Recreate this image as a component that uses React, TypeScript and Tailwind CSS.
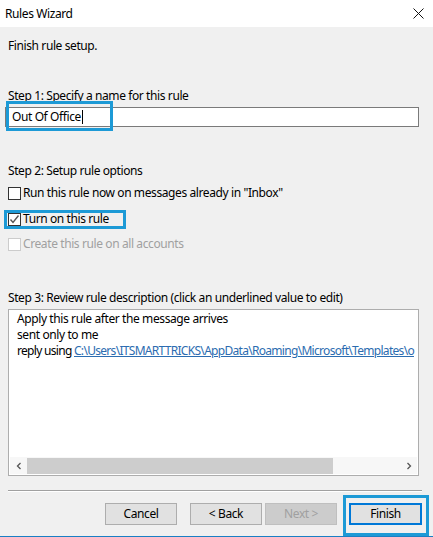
import React from "react";

const font = { fontFamily: '"Noto Sans", "Segoe UI", sans-serif' };

function Box({ checked, disabled }: { checked?: boolean; disabled?: boolean }) {
  return (
    <div
      className={
        "w-[13px] h-[13px] border bg-white flex items-center justify-center shrink-0 " +
        (disabled ? "border-[#cccccc]" : "border-[#333333]")
      }
    >
      {checked && (
        <svg width="11" height="11" viewBox="0 0 11 11">
          <path d="M1.5 5.5 L4 8.5 L9.5 1.5" fill="none" stroke="#555" strokeWidth="1.4" />
        </svg>
      )}
    </div>
  );
}

export default function App() {
  return (
    <div className="w-[433px] h-[537px] bg-[#f0f0f0] text-[12px] text-black relative overflow-hidden leading-[16px] tracking-[-0.4px]" style={font}>
      {/* title bar */}
      <div className="h-[27px] bg-white flex items-center justify-between pl-[5px] pr-[9px]">
        <span className="text-[12px]">Rules Wizard</span>
        <svg width="11" height="11" viewBox="0 0 11 11">
          <path d="M0.5 0.5 L10.5 10.5 M10.5 0.5 L0.5 10.5" stroke="#111" strokeWidth="1" />
        </svg>
      </div>

      <div className="pl-[8px] pt-[11px]">Finish rule setup.</div>

      <div className="pl-[8px] mt-[34px]">Step 1: Specify a name for this rule</div>
      <div className="relative ml-[5px] mt-[3px] w-[414px] h-[20px] border border-[#7a7a7a] bg-white flex items-center pl-[6px]">
        <span>Out Of Office</span>
        <span className="w-[1px] h-[14px] bg-black ml-[1px]" />
        <div className="absolute left-[0px] top-[-7px] w-[107px] h-[30px] border-[3px] border-[#1d9ad6]" />
      </div>

      <div className="pl-[8px] mt-[36px]">Step 2: Setup rule options</div>
      <div className="pl-[8px] mt-[6px] flex items-center gap-[2px] h-[16px] relative">
        <Box />
        <span>Run this rule now on messages already in "Inbox"</span>
      </div>
      <div className="pl-[8px] mt-[10px] flex items-center gap-[2px] h-[16px] relative">
        <Box checked />
        <span>Turn on this rule</span>
        <div className="absolute left-[4px] top-[-1px] w-[122px] h-[19px] border-[3px] border-[#1d9ad6]" />
      </div>
      <div className="pl-[8px] mt-[9px] flex items-center gap-[2px] h-[16px] text-[#a0a0a0]">
        <Box disabled />
        <span>Create this rule on all accounts</span>
      </div>

      <div className="pl-[8px] mt-[38px]">Step 3: Review rule description (click an underlined value to edit)</div>
      <div className="ml-[8px] mt-[3px] w-[411px] h-[167px] border border-[#adadad] bg-white flex flex-col">
        <div className="flex-1 pl-[8px] pt-[1px] overflow-hidden whitespace-nowrap">
          <div>Apply this rule after the message arrives</div>
          <div>sent only to me</div>
          <div className="tracking-[-0.7px]">
            reply using{" "}
            <span className="text-[#2b6cb0] underline">C:\Users\ITSMARTTRICKS\AppData\Roaming\Microsoft\Templates\o</span>
          </div>
        </div>
        <div className="h-[17px] mb-[1px] mx-[1px] flex items-center bg-[#f7f7f7]">
          <div className="w-[17px] h-[17px] flex items-center justify-center">
            <svg width="8" height="8" viewBox="0 0 8 8">
              <path d="M5.5 1 L2.5 4 L5.5 7" fill="none" stroke="#555" strokeWidth="1.3" />
            </svg>
          </div>
          <div className="w-[306px] h-[16px] bg-[#cdcdcd]" />
          <div className="flex-1" />
          <div className="w-[17px] h-[17px] flex items-center justify-center">
            <svg width="8" height="8" viewBox="0 0 8 8">
              <path d="M2.5 1 L5.5 4 L2.5 7" fill="none" stroke="#555" strokeWidth="1.3" />
            </svg>
          </div>
        </div>
      </div>

      <div className="ml-[8px] mt-[14px] w-[414px] h-[2px] border-t border-[#a0a0a0] border-b border-b-white" />

      <div className="flex mt-[11px] pl-[105px] items-center">
        <button className="w-[72px] h-[22px] border border-[#adadad] bg-[#e1e1e1]">Cancel</button>
        <button className="w-[72px] h-[22px] border border-[#adadad] bg-[#e1e1e1] ml-[13px]">&lt; Back</button>
        <button className="w-[72px] h-[22px] border border-[#bfbfbf] bg-[#cccccc] text-[#a0a0a0] ml-[3px]">Next &gt;</button>
        <div className="relative ml-[12px]">
          <button className="w-[73px] h-[22px] border-2 border-[#0078d7] bg-[#e1e1e1] block">Finish</button>
          <div className="absolute left-[-6px] top-[-8px] w-[86px] h-[41px] border-[3px] border-[#1d9ad6]" />
        </div>
      </div>

      <div className="absolute left-0 bottom-0 w-full h-[1px] bg-[#1a7fc4]" />
    </div>
  );
}
